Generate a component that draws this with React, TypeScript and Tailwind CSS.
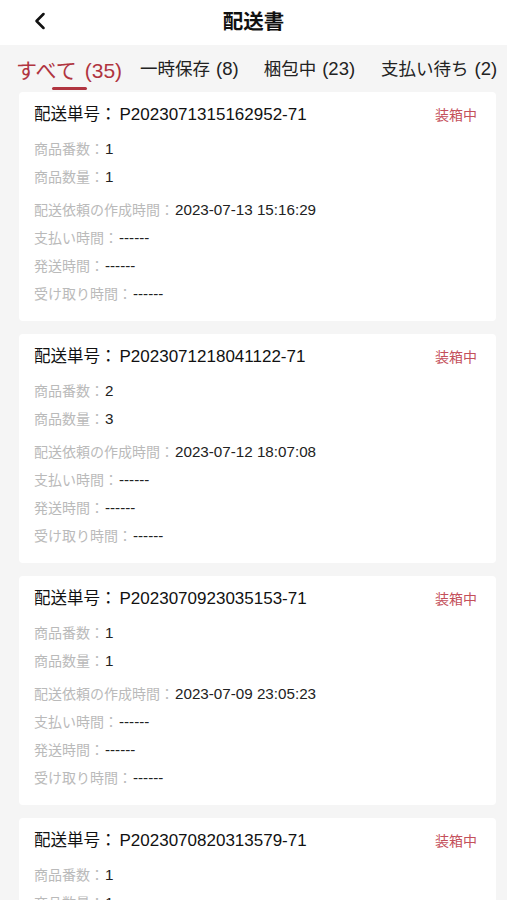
import { ChevronLeft } from "lucide-react";

type Order = {
  no: string;
  kinds: string;
  qty: string;
  created: string;
};

const orders: Order[] = [
  { no: "P2023071315162952-71", kinds: "1", qty: "1", created: "2023-07-13 15:16:29" },
  { no: "P2023071218041122-71", kinds: "2", qty: "3", created: "2023-07-12 18:07:08" },
  { no: "P2023070923035153-71", kinds: "1", qty: "1", created: "2023-07-09 23:05:23" },
  { no: "P2023070820313579-71", kinds: "1", qty: "1", created: "2023-07-08 20:31:35" },
];

const Row = ({ label, value }: { label: string; value: string }) => (
  <div className="flex items-center h-[28px] text-[14px] whitespace-nowrap">
    <span className="text-[#bababa]">{label}：</span>
    <span className="text-[#222] text-[15.2px] ml-[1px]">{value}</span>
  </div>
);

const Tab = ({ name, count }: { name: string; count: string }) => (
  <span className="leading-[30px] mb-[8px] whitespace-nowrap shrink-0">
    {name}
    <span className="ml-[6px] text-[18.5px]">{count}</span>
  </span>
);

const Card = ({ order }: { order: Order }) => (
  <div className="bg-white rounded-[4px] pl-[15px] pr-[19px] pt-[12px] pb-[14px] h-[229px]">
    <div className="flex justify-between items-center h-[22px] whitespace-nowrap">
      <div className="text-[16.5px] text-[#111]">
        配送単号：<span className="ml-[3px] text-[17px]">{order.no}</span>
      </div>
      <div className="text-[14px] text-[#c4505b]">装箱中</div>
    </div>
    <div className="mt-[9px]">
      <Row label="商品番数" value={order.kinds} />
      <Row label="商品数量" value={order.qty} />
    </div>
    <div className="mt-[5px]">
      <Row label="配送依頼の作成時間" value={order.created} />
      <Row label="支払い時間" value="------" />
      <Row label="発送時間" value="------" />
      <Row label="受け取り時間" value="------" />
    </div>
  </div>
);

const App = () => {
  return (
    <div
      className="w-[507px] h-[900px] overflow-hidden bg-[#f5f5f5]"
      style={{ fontFamily: '"Liberation Sans", "Noto Sans CJK JP", sans-serif' }}
    >
      <div className="bg-white h-[45px] relative flex items-center justify-center">
        <ChevronLeft className="absolute left-[26px] top-[7px] text-[#111]" size={28} strokeWidth={2.2} />
        <div className="text-[20.5px] font-bold text-[#111]">配送書</div>
      </div>
      <div className="flex items-end h-[47px] pl-[16px] pr-[10px] text-[17.5px] text-[#222] whitespace-nowrap">
        <div className="relative flex flex-col items-center mr-[18px] shrink-0">
          <span className="text-[21px] text-[#b0343f] leading-[30px]">
            すべて<span className="ml-[8px]">(35)</span>
          </span>
          <span className="h-[3px] w-[35px] bg-[#b0343f] rounded-full mt-[1px] mb-[2px]"></span>
        </div>
        <Tab name="一時保存" count="(8)" />
        <div className="w-[25px] shrink-0"></div>
        <Tab name="梱包中" count="(23)" />
        <div className="w-[26px] shrink-0"></div>
        <Tab name="支払い待ち" count="(2)" />
      </div>
      <div className="flex flex-col gap-[13px] pl-[19px] pr-[11px]">
        {orders.map((o) => (
          <Card key={o.no} order={o} />
        ))}
      </div>
    </div>
  );
};

export default App;
